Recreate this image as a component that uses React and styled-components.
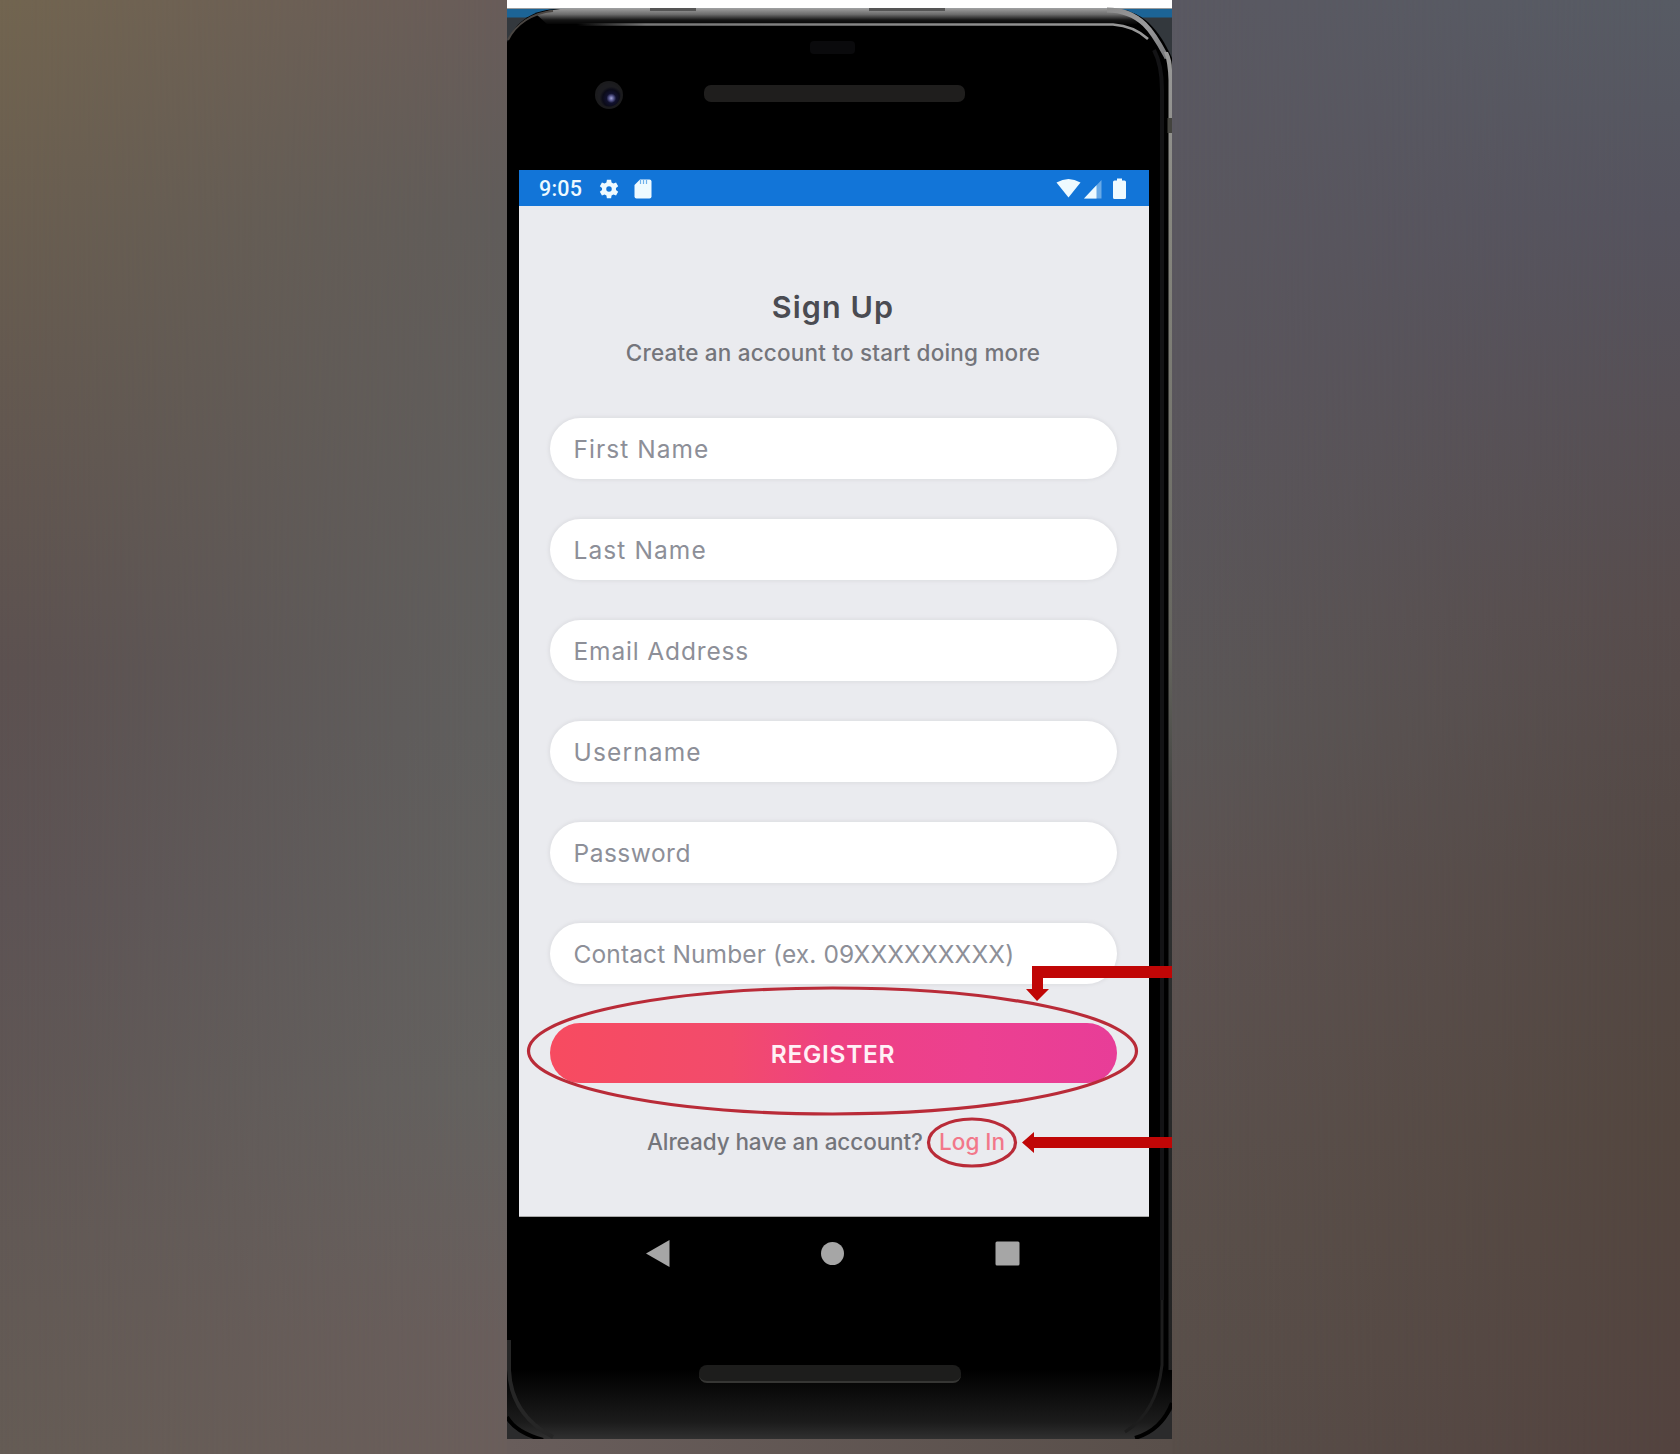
import React from "react";
import styled, { createGlobalStyle, css } from "styled-components";

const GlobalStyle = createGlobalStyle`
  * { box-sizing: border-box; }
  html, body, #root { margin: 0; height: 100%; }
  body { overflow: hidden; background: #61565a; font-family: Inter, "Liberation Sans", sans-serif; }
`;

const Page = styled.main`
  display: grid;
  grid-template-columns: 507px 665px 1fr;
  width: 1680px;
  height: 1454px;
  background: linear-gradient(90deg, #625a54 0, #685d5b 507px, #594f4a 1172px, #53443f);
`;

const Backdrop = styled.div`
  position: relative;
  background: ${(p) => p.$from};
  &::after {
    content: "";
    position: absolute;
    inset: 0;
    background: ${(p) => p.$to};
    mask-image: linear-gradient(90deg, transparent, #000);
  }
`;

const Shot = styled.section`
  position: relative;
  display: flex;
  flex-direction: column;
  height: 1439px;
  padding: 170px 23.5px 0 11.5px;
  overflow: hidden;
  background: #000;
`;

const Layer = styled.svg`
  position: absolute;
  inset: 0;
  width: 665px;
  height: 1439px;
  pointer-events: none;
`;

const Screen = styled.div`
  position: relative;
  display: flex;
  flex-direction: column;
  height: 1047px;
  background: #eaebef;
  border-bottom: 1px solid #aaa;
`;

const StatusBar = styled.header`
  display: flex;
  align-items: center;
  justify-content: space-between;
  height: 35.5px;
  padding: 2px 23px 0 20.5px;
  background: #1275d8;
  color: #eefaff;
`;

const StatusGroup = styled.div`
  display: flex;
  align-items: center;
`;

const Clock = styled.span`
  width: 59px;
  font: 500 21.5px/24px Roboto, sans-serif;
  letter-spacing: 0.2px;
`;

const StatusIcon = styled.svg`
  display: block;
  width: ${(p) => p.$w}px;
  height: 22px;
  margin-left: ${(p) => p.$gap || 0}px;
  fill: currentColor;
`;

const Form = styled.form`
  display: flex;
  flex-direction: column;
  padding: 77px 32px 0 31px;
`;

const line = css`
  white-space: nowrap;
  letter-spacing: ${(p) => p.$track || 0}px;
`;

const Title = styled.h1`
  ${line}
  margin: 0;
  font-size: 30.5px;
  font-weight: 600;
  line-height: 47px;
  text-align: center;
  color: #4a4b52;
`;

const Subtitle = styled.p`
  ${line}
  margin: 0 0 42px;
  font-size: 22.5px;
  font-weight: 500;
  line-height: 46px;
  text-align: center;
  color: #74757b;
`;

const Fields = styled.div`
  display: flex;
  flex-direction: column;
  gap: 40px;
`;

const Field = styled.label`
  ${line}
  display: flex;
  align-items: center;
  height: 61px;
  padding: 1px 24px 0;
  border-radius: 31px;
  background: #fff;
  box-shadow: 0 0 3px 2px #e0e1e5;
  font-size: 24.5px;
  font-weight: 400;
  color: #8d8f98;
`;

const Register = styled.button`
  ${line}
  height: 60px;
  margin: 39px 0 0;
  padding: 3px 0 0;
  border: 0;
  border-radius: 30px;
  background: linear-gradient(90deg, #f74b60, #f24b6c 32%, #ee4182 50%, #ec4090 75%, #e83d98);
  font: 600 24.5px/57px Inter, sans-serif;
  color: #fff0f6;
`;

const Footer = styled.p`
  display: flex;
  justify-content: space-between;
  margin: 44.5px 38px 0 97.5px;
  width: 358px;
  font-size: 22.5px;
  font-weight: 500;
  line-height: 30px;
  color: #74757b;
`;

const FooterText = styled.span`
  ${line}
`;

const LoginLink = styled.a`
  ${line}
  color: #f2778a;
`;

const NavBar = styled.nav`
  display: flex;
  justify-content: space-between;
  width: 376px;
  margin: 23px 0 0 126px;
`;

const NavIcon = styled.svg`
  width: 27px;
  height: 27px;
  fill: #a6a6a6;
`;

const Speaker = styled.div`
  position: relative;
  width: 262px;
  height: 18px;
  margin: 98px 0 0 180px;
  border-radius: 8px;
  background: #1d1d1c;
  border-bottom: 2px solid #363634;
`;

const FIELDS = [
  ["First Name", 1.05],
  ["Last Name", 1.1],
  ["Email Address", 0.85],
  ["Username", 1.15],
  ["Password", 0.5],
  ["Contact Number (ex. 09XXXXXXXXX)", 0.13],
];

/* Bezel of the handset: edges, camera, ear speaker and the lit lower rim. */
function Bezel() {
  return (
    <Layer viewBox="0 0 665 1439">
      <defs>
        <linearGradient id="rim" gradientUnits="userSpaceOnUse" x1="0" y1="8" x2="0" y2="24">
          <stop offset="0" stopColor="#a2a2a2" />
          <stop offset="0.4" stopColor="#6c6c6c" />
          <stop offset="0.75" stopColor="#151515" />
          <stop offset="1" stopColor="#050505" />
        </linearGradient>
        <linearGradient id="corner" x1="0" y1="0" x2="1" y2="1">
          <stop offset="0" stopColor="#8d8d8d" />
          <stop offset="0.5" stopColor="#9a9a9c" />
          <stop offset="1" stopColor="#77787a" />
        </linearGradient>
        <linearGradient id="chin" x1="0" y1="0" x2="0" y2="1">
          <stop offset="0" stopColor="#000" />
          <stop offset="0.75" stopColor="#1b1b1b" />
          <stop offset="1" stopColor="#303030" />
        </linearGradient>
        <linearGradient id="side" x1="0" y1="0" x2="0" y2="1">
          <stop offset="0" stopColor="#999" />
          <stop offset="0.12" stopColor="#888880" />
          <stop offset="0.45" stopColor="#66665f" />
          <stop offset="0.62" stopColor="#303232" />
          <stop offset="1" stopColor="#222" />
        </linearGradient>
        <linearGradient id="shine" x1="0" y1="0" x2="1" y2="0">
          <stop offset="0" stopColor="#777" stopOpacity="0" />
          <stop offset="0.12" stopColor="#777" />
          <stop offset="1" stopColor="#999" />
        </linearGradient>
        <radialGradient id="lens" cx="0.6" cy="0.64" r="0.5">
          <stop offset="0" stopColor="#a3a4d6" />
          <stop offset="0.2" stopColor="#5a5b92" />
          <stop offset="0.42" stopColor="#11112e" />
          <stop offset="0.75" stopColor="#0b0b18" />
          <stop offset="1" stopColor="#1c1c20" />
        </radialGradient>
      </defs>
      <rect width="665" height="60" fill="#33383d" />
      <rect width="665" height="8.500" fill="#fff" />
      <rect y="9" width="665" height="8.500" fill="#1c6496" />
      <path d="M0 42C8 22 26 9 52 9H606C641 9 656 39 665 58V70H0Z" fill="#000" />
      <path d="M30 15Q44 8.500 62 8.500H606Q622 9 632 17L630 24H40Z" fill="url(#rim)" />
      <path d="M143 8h46v3h-46zM362 8h76v3h-76z" fill="#555" />
      <path d="M600 10C636 10 648 36 660 58" fill="none" stroke="url(#corner)" strokeWidth="5" />
      <path d="M1 40C9 24 25 13 46 11" fill="none" stroke="#4a4643" strokeWidth="2" />
      <path d="M70 24.500H606Q627 26 641 39" fill="none" stroke="url(#shine)" strokeWidth="2.600" />
      <path d="M655 1300V90Q655 65 647 50" fill="none" stroke="#131315" strokeWidth="4" />
      <path d="M657 52L661 52Q665 60 665 70V1380H661.500V80Q661 62 657 52Z" fill="url(#side)" />
      <rect x="660.500" y="118" width="4.500" height="15" fill="#44443f" />
      <rect x="303" y="41" width="45" height="13" rx="4" fill="#0a0a0c" />
      <circle cx="102" cy="95" r="14" fill="#1b1b1d" />
      <circle cx="102" cy="95" r="11.500" fill="url(#lens)" />
      <rect x="197" y="85" width="261" height="17" rx="7" fill="#1f1e1d" />
      <rect y="1370" width="665" height="69" fill="url(#chin)" />
      <path d="M2 1340V1370Q4 1415 46 1437" fill="none" stroke="#262626" strokeWidth="4" />
      <path d="M0 1417L0 1439H22Q8 1430 0 1417ZM665 1410V1439H632Q652 1430 665 1410Z" fill="#2b2b2c" />
      <path d="M0 1417Q8 1432 36 1440M665 1403Q655 1430 628 1438" fill="none" stroke="#000" strokeWidth="4" />
      <path d="M655 1300V1365Q650 1412 618 1432" fill="none" stroke="#1d1d1d" strokeWidth="3" />
    </Layer>
  );
}

/* Red callouts drawn over the register button and the log in link. */
function Callouts() {
  return (
    <Layer viewBox="0 0 665 1439">
      <g fill="none" stroke="#b92b38" strokeWidth="3.200">
        <ellipse cx="325.500" cy="1051" rx="304" ry="63" />
        <ellipse cx="465" cy="1142.500" rx="43.500" ry="23.500" />
      </g>
      <g fill="#c00606">
        <path d="M665 966V978H536V989H542L530 1001L519 989H525V966Z" />
        <path d="M665 1137V1148H527V1153L515 1142.500L527 1132V1137Z" />
      </g>
    </Layer>
  );
}

export default function App() {
  return (
    <>
      <GlobalStyle />
      <Page>
        <Backdrop
          $from="linear-gradient(#726550, #655a50 24%, #5c5150 46%, #5d5354 62%, #625955 85%, #655c55)"
          $to="linear-gradient(#685c59, #605c5a 15%, #605f5e 50%, #646260 75%, #695e5c 92%, #6a5e5b)"
        />
        <Shot>
          <Bezel />
          <Screen>
            <StatusBar>
              <StatusGroup>
                <Clock>9:05</Clock>
                <StatusIcon $w={22} viewBox="0 0 24 24">
                  <path
                    fillRule="evenodd"
                    d="M9.700 1.800h4.600l.5 3 2 1.200 2.900-1.100 2.300 4-2.400 1.900v2.400l2.400 1.900-2.300 4-2.900-1.100-2 1.200-.5 3H9.700l-.5-3-2-1.200-2.900 1.100-2.300-4 2.400-1.900v-2.400L2 8.900l2.300-4L7.200 6l2-1.200zM12 8.900a3 3 0 1 0 0 6a3 3 0 1 0 0-6z"
                  />
                </StatusIcon>
                <StatusIcon $w={18} $gap={14} viewBox="0 0 18 22">
                  <path d="M6 1.500H15.500Q17.500 1.500 17.500 3.500V18.500Q17.500 20.500 15.500 20.500H2.500Q.5 20.500 .5 18.500V7z" />
                  <path d="M6.500 2v4M9.500 2v4M12.500 2v4" stroke="#6fb1ec" strokeWidth="1.200" />
                </StatusIcon>
              </StatusGroup>
              <StatusGroup>
                <StatusIcon $w={25} viewBox="0 0 25 22">
                  <path d="M.5 4.500Q12.500 -2.500 24.500 4.500L12.500 19.500z" />
                </StatusIcon>
                <StatusIcon $w={18} $gap={2.5} viewBox="0 0 18 22">
                  <path d="M17.500 2V20.500H0z" opacity=".4" />
                  <path d="M12.500 7.300V20.500H0z" />
                </StatusIcon>
                <StatusIcon $w={13} $gap={11} viewBox="0 0 13 22">
                  <path d="M4 .5h5v2h2.500Q13 2.500 13 4v15.500Q13 21 11.500 21h-10Q0 21 0 19.500V4Q0 2.500 1.500 2.500H4z" />
                </StatusIcon>
              </StatusGroup>
            </StatusBar>
            <Form>
              <Title $track={1.1}>Sign Up</Title>
              <Subtitle $track={0.2}>Create an account to start doing more</Subtitle>
              <Fields>
                {FIELDS.map(([name, track]) => (
                  <Field key={name} $track={track}>
                    {name}
                  </Field>
                ))}
              </Fields>
              <Register type="button" $track={0.7}>
                REGISTER
              </Register>
              <Footer>
                <FooterText $track={-0.09}>Already have an account?</FooterText>
                <LoginLink $track={0}>Log In</LoginLink>
              </Footer>
            </Form>
          </Screen>
          <NavBar>
            <NavIcon viewBox="0 0 27 27">
              <path d="M1 13.500L24.500 0V27z" />
            </NavIcon>
            <NavIcon viewBox="0 0 27 27">
              <circle cx="13.500" cy="13.500" r="11.500" />
            </NavIcon>
            <NavIcon viewBox="0 0 27 27">
              <rect x="1.500" y="1.500" width="24" height="24" rx="1.500" />
            </NavIcon>
          </NavBar>
          <Speaker />
          <Callouts />
        </Shot>
        <Backdrop
          $from="linear-gradient(#5a5962, #5a565d 25%, #5b5757 50%, #5d5352 62%, #5a504b 85%, #584e49)"
          $to="linear-gradient(#575b64, #55535e 15%, #574c4c 42%, #534844 60%, #53463f 78%, #53433f)"
        />
      </Page>
    </>
  );
}
